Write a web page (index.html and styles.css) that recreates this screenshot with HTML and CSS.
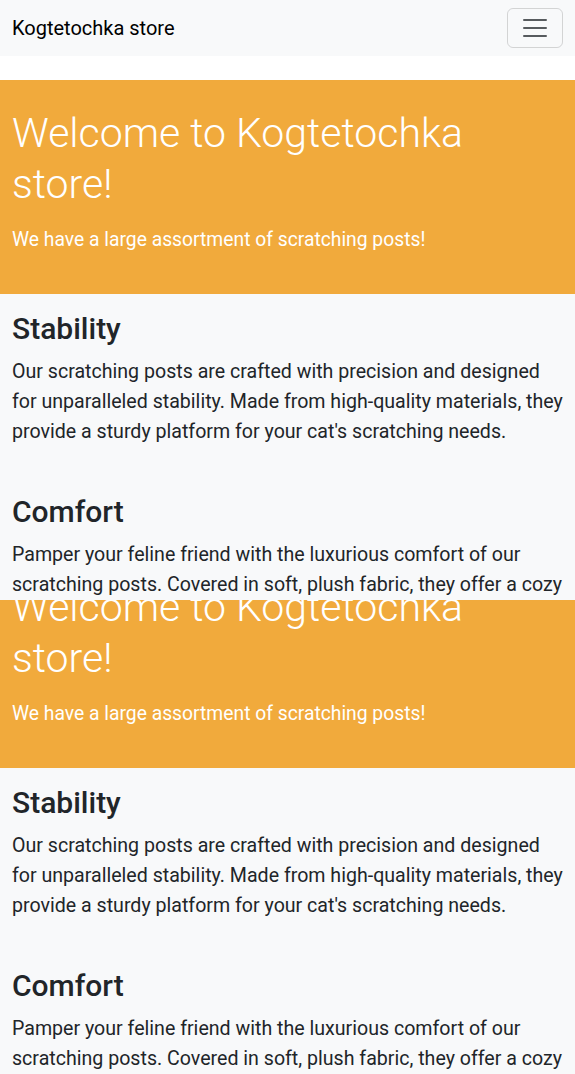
FILE: index.html
```html
<!DOCTYPE html>
<html lang="en">
<head>
<meta charset="utf-8">
<title>Kogtetochka store</title>
<link rel="stylesheet" href="styles.css">
</head>
<body>
<div class="shot shot-first">
  <div class="page">
    <nav class="navbar">
      <span class="brand">Kogtetochka store</span>
      <button class="toggler" aria-label="Menu">
        <svg width="30" height="30" viewBox="0 0 30 30"><path d="M4 7h22M4 15h22M4 23h22" stroke="rgba(33,37,41,0.75)" stroke-width="2" stroke-linecap="round"/></svg>
      </button>
    </nav>
    <div class="spacer"></div>
    <header class="hero">
      <h1 class="hero-title">Welcome to Kogtetochka store!</h1>
      <p class="lead">We have a large assortment of scratching posts!</p>
    </header>
    <main class="features">
      <section class="feature">
        <h2>Stability</h2>
        <p>Our scratching posts are crafted with precision and designed for unparalleled stability. Made from high-quality materials, they provide a sturdy platform for your cat's scratching needs.</p>
      </section>
      <section class="feature">
        <h2>Comfort</h2>
        <p>Pamper your feline friend with the luxurious comfort of our scratching posts. Covered in soft, plush fabric, they offer a cozy retreat for your cat to relax and play.</p>
      </section>
    </main>
  </div>
</div>
<div class="shot shot-second">
  <div class="page page-scrolled">
    <nav class="navbar">
      <span class="brand">Kogtetochka store</span>
      <button class="toggler" aria-label="Menu">
        <svg width="30" height="30" viewBox="0 0 30 30"><path d="M4 7h22M4 15h22M4 23h22" stroke="rgba(33,37,41,0.75)" stroke-width="2" stroke-linecap="round"/></svg>
      </button>
    </nav>
    <div class="spacer"></div>
    <header class="hero">
      <h1 class="hero-title">Welcome to Kogtetochka store!</h1>
      <p class="lead">We have a large assortment of scratching posts!</p>
    </header>
    <main class="features">
      <section class="feature">
        <h2>Stability</h2>
        <p>Our scratching posts are crafted with precision and designed for unparalleled stability. Made from high-quality materials, they provide a sturdy platform for your cat's scratching needs.</p>
      </section>
      <section class="feature">
        <h2>Comfort</h2>
        <p>Pamper your feline friend with the luxurious comfort of our scratching posts. Covered in soft, plush fabric, they offer a cozy retreat for your cat to relax and play.</p>
      </section>
    </main>
  </div>
</div>
</body>
</html>
```
FILE: styles.css
```css
* { box-sizing: border-box; }
html, body { margin: 0; padding: 0; }
body {
  font-family: Roboto, "Liberation Sans", sans-serif;
  color: #212529;
  background: #f8f9fa;
}
.shot { overflow: hidden; }
.shot-first { height: 600px; }
.shot-second { height: 474px; }
.page { background: #f8f9fa; }
.page-scrolled { margin-top: -126px; }

.navbar {
  display: flex;
  align-items: center;
  justify-content: space-between;
  height: 56px;
  padding: 0 12px;
  background: #f8f9fa;
}
.brand { font-size: 20px; color: #000; }
.toggler {
  width: 56px;
  height: 40px;
  padding: 0;
  display: flex;
  align-items: center;
  justify-content: center;
  background: transparent;
  border: 1px solid rgba(0,0,0,0.15);
  border-radius: 6px;
}
.toggler svg { display: block; }
.spacer { height: 24px; background: #fff; }

.hero {
  background: #f1aa3c;
  color: #fff;
  padding: 28px 12px 24px;
  height: 214px;
}
.hero-title {
  margin: 0 0 15px;
  font-size: 41px;
  line-height: 51px;
  font-weight: 300;
}
.lead {
  margin: 0;
  font-size: 19.3px;
  line-height: 30px;
  font-weight: 400;
}

.features { padding: 16px 12px 0; }
.feature { margin-bottom: 46px; }
.feature h2 {
  margin: 0 0 10px;
  font-size: 30px;
  line-height: 37px;
  font-weight: 500;
}
.feature p {
  margin: 0;
  font-size: 19.6px;
  line-height: 30px;
}
```
